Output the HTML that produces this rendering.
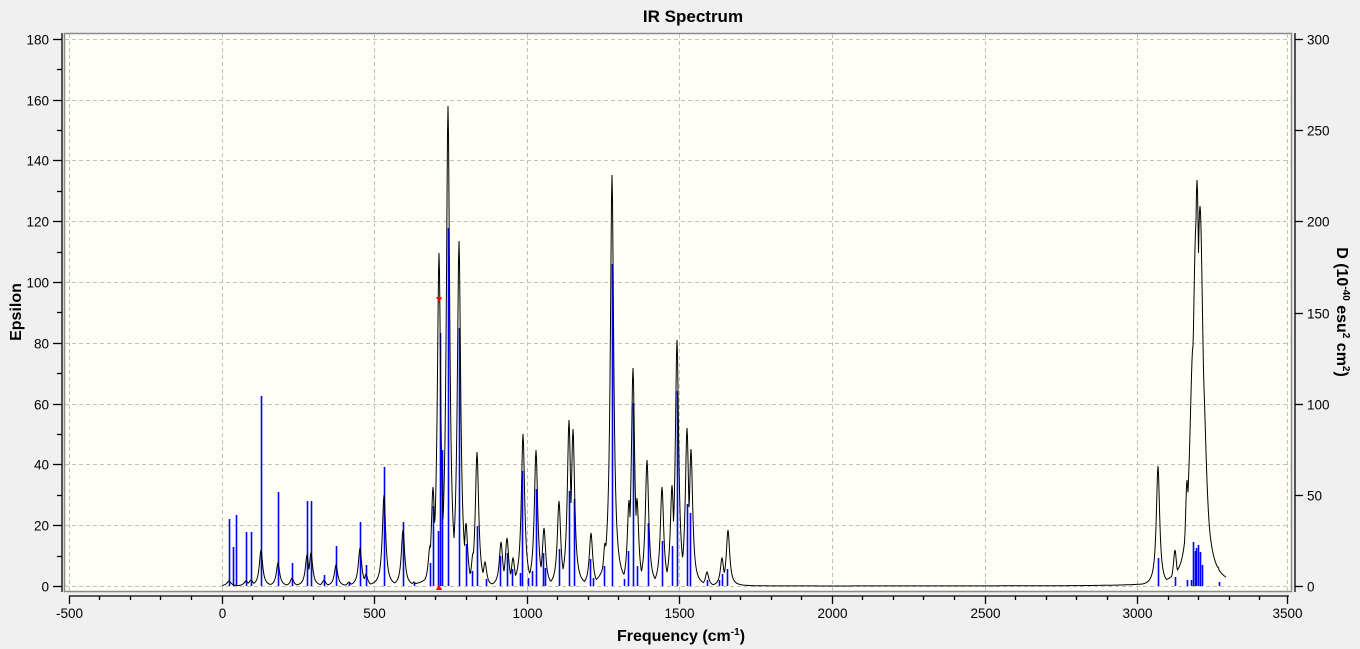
<!DOCTYPE html>
<html><head><meta charset="utf-8"><style>
html,body{margin:0;padding:0;background:#f0f0f0;width:1360px;height:649px;overflow:hidden}
svg{display:block;font-family:"Liberation Sans",Arial,sans-serif}
</style></head><body>
<svg id="s" width="1360" height="649" viewBox="0 0 1360 649">
<rect x="0" y="0" width="1360" height="649" fill="#f0f0f0"/>
<rect x="64.5" y="33.5" width="1227" height="558" fill="#fffff7" stroke="#8a8a8a" stroke-width="1.5"/>
<g id="grid" stroke="#c0c0c0" stroke-dasharray="4,3" stroke-width="1"></g>
<g id="axes" stroke="#000" stroke-width="1.3"></g>
<g id="labels" font-size="13.5" fill="#000"></g>
<g id="sticks" stroke="#0000ff" stroke-width="1.6"></g>
<path id="curve" fill="none" stroke="#000" stroke-width="1"/>
<polygon points="436,297 442,297 439,303" fill="#ff0000"/>
<polygon points="436,590 442,590 439,584" fill="#ff0000"/>
<text x="693" y="22" font-size="17" font-weight="bold" text-anchor="middle">IR Spectrum</text>
<text x="681" y="641" font-size="16" font-weight="bold" text-anchor="middle">Frequency (cm<tspan font-size="10" dy="-6">-1</tspan><tspan dy="6">)</tspan></text>
<text transform="translate(21,312) rotate(-90)" font-size="16" font-weight="bold" text-anchor="middle">Epsilon</text>
<text transform="translate(1337,312) rotate(90)" font-size="16" font-weight="bold" text-anchor="middle">D (10<tspan font-size="10" dy="-6">-40</tspan><tspan dy="6"> esu</tspan><tspan font-size="10" dy="-6">2</tspan><tspan dy="6"> cm</tspan><tspan font-size="10" dy="-6">2</tspan><tspan dy="6">)</tspan></text>
</svg>
<script>
var NS="http://www.w3.org/2000/svg";
function el(p,t,a,txt){var e=document.createElementNS(NS,t);for(var k in a)e.setAttribute(k,a[k]);if(txt!==undefined)e.textContent=txt;document.getElementById(p).appendChild(e);return e;}
var X0=221.5,SX=0.3052,Y0=586,SY=3.04;
function fx(f){return X0+f*SX;}
for(var f=-500;f<=3500;f+=500){var x=Math.round(fx(f))+0.5;if(f==3500)x=1287.5;el("grid","line",{x1:x,y1:34,x2:x,y2:591});}
for(var e=0;e<=180;e+=20){var y=Math.round(Y0-e*SY)+0.5;el("grid","line",{x1:65,y1:y,x2:1291,y2:y});}
el("axes","line",{x1:62,y1:33,x2:62,y2:592});
for(var e=0;e<=180;e+=10){var y=Math.round(Y0-e*SY)+0.5;el("axes","line",{x1:e%20==0?53:57,y1:y,x2:62,y2:y});if(e%20==0)el("labels","text",{x:49,y:y+5,"text-anchor":"end"},String(e));}
el("axes","line",{x1:1295,y1:33,x2:1295,y2:592});
for(var d=0;d<=300;d+=50){var y=Math.round(Y0-d*547/300)+0.5;el("axes","line",{x1:1295,y1:y,x2:1303,y2:y});el("labels","text",{x:1307,y:y+5},String(d));}
el("axes","line",{x1:69,y1:596,x2:1289,y2:596});
for(var f=-500;f<=3500;f+=100){var x=Math.round(fx(f))+0.5;if(f==3500)x=1287.5;var maj=f%500==0;el("axes","line",{x1:x,y1:596,x2:x,y2:maj?604:600});if(maj)el("labels","text",{x:x,y:618,"text-anchor":"middle"},String(f));}
var st=[[229,67],[233,39],[236,71],[246,54],[251,54],[261,190],[278,94],[292,23],[307,85],[311,85],[324,11],[336,40],[349,3],[360,64],[366,21],[384,119],[403,64],[414,3],[430,23],[433,80],[438,55],[440,253],[442,136],[448,358],[459,258],[466,42],[472,15],[477,60],[486,7],[500,30],[507,33],[512,17],[520,13],[522,115],[528,8],[532,15],[536,97],[543,33],[545,18],[559,37],[569,95],[574,87],[590,27],[593,8],[604,20],[612,322],[624,7],[628,35],[633,183],[637,20],[648,63],[662,45],[672,40],[677,195],[687,82],[690,73],[707,6],[719,6],[722,12],[727,17],[1158,28],[1175,9],[1187,6],[1191,6],[1193,44],[1195,35],[1196,38],[1198,41],[1200,34],[1202,21],[1219,4]];
st.forEach(function(s){el("sticks","line",{x1:s[0]+0.5,y1:586,x2:s[0]+0.5,y2:586-s[1]});});
var pk=[[229,5,2.5],[246,5,2.5],[251,6,2.5],[261,36,2],[278,23,2],[292,8,2],[307,31,2],[311,33,2],[324,6,2],[336,21,2],[349,4,2],[360,38,2],[366,12,2],[384,91,2],[403,56,2],[414,4,2],[430,40,2.2],[433,99,2],[439,333,2],[448,480,2],[459,345,2],[466,63,2],[473,33,2],[477,134,2],[485,24,2],[501,44,2],[507,48,2],[513,28,2],[523,152,2],[536,136,2],[544,58,2],[559,85,2],[569,166,2],[573,157,2],[591,53,2],[605,43,2],[612,411,2],[629,86,2],[633,218,2],[637,88,2],[647,126,2],[662,99,2],[672,101,2],[677,246,2],[687,158,2],[691,137,2],[707,14,2],[722,28,2],[728,56,2],[1158,120,2],[1175,36,2],[1187,106,2],[1190,80,4],[1193,240,4],[1196,360,4],[1197,406,3],[1200,380,4],[1203,210,4],[1218,19,2.2]];
var d="";
for(var x=222;x<=1226;x+=0.5){var h=0;
 for(var i=0;i<pk.length;i++){var q=pk[i],u=(x-q[0])/q[2];var v=q[1]/(1+u*u);if(v>h)h=v;}
 var y=(586-h).toFixed(1);d+=(d?"L":"M")+x+","+y;}
document.getElementById("curve").setAttribute("d",d);
</script>
</body></html>
